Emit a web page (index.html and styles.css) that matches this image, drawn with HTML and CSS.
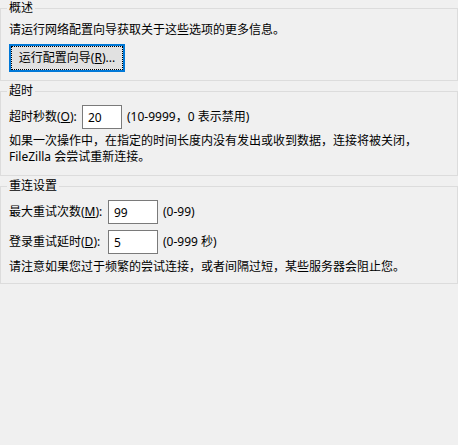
FILE: index.html
```html
<!DOCTYPE html>
<html lang="zh-CN">
<head>
<meta charset="utf-8">
<link rel="stylesheet" href="styles.css">
</head>
<body>
<fieldset class="group">
  <legend class="title">概述</legend>
  <p class="text">请运行网络配置向导获取关于这些选项的更多信息。</p>
  <button class="btn" type="button">运行配置向导(<u>R</u>)...</button>
</fieldset>
<fieldset class="group">
  <legend class="title">超时</legend>
  <div class="row">
    <span class="label label-timeout">超时秒数(<u>O</u>):</span>
    <input class="field field-short" type="text" value="20" readonly>
    <span class="hint">(10-9999，0 表示禁用)</span>
  </div>
  <p class="text text-after-row">如果一次操作中，在指定的时间长度内没有发出或收到数据，连接将被关闭，<br>FileZilla 会尝试重新连接。</p>
</fieldset>
<fieldset class="group">
  <legend class="title">重连设置</legend>
  <div class="row">
    <span class="label label-retry">最大重试次数(<u>M</u>):</span>
    <input class="field field-long" type="text" value="99" readonly>
    <span class="hint">(0-99)</span>
  </div>
  <div class="row row-next">
    <span class="label label-retry">登录重试延时(<u>D</u>):</span>
    <input class="field field-long" type="text" value="5" readonly>
    <span class="hint">(0-999 秒)</span>
  </div>
  <p class="text text-note">请注意如果您过于频繁的尝试连接，或者间隔过短，某些服务器会阻止您。</p>
</fieldset>
</body>
</html>
```

FILE: styles.css
```css
html, body {
  margin: 0;
  padding: 0;
  background: #f0f0f0;
}

body {
  font-family: "Noto Sans", "Noto Sans CJK SC", sans-serif;
  font-size: 12px;
  line-height: 16px;
  color: #000;
}

.group {
  margin: 0 0 2px 0;
  padding: 6px 8px 8px 8px;
  border: 1px solid #dcdcdc;
  min-width: 0;
}

.group:nth-of-type(2) {
  padding-bottom: 10px;
}

.title {
  padding: 0 2px;
  margin-left: -2px;
  line-height: 16px;
}

.text {
  margin: 0;
  line-height: 16px;
}

.text-after-row {
  margin-top: 4px;
}

.text-note {
  margin-top: 5px;
}

.btn {
  display: block;
  margin-top: 6px;
  width: 116px;
  height: 28px;
  padding: 0;
  background: #e1e1e1;
  border: 2px solid #0078d7;
  outline: 1px dotted #000;
  outline-offset: -3px;
  font: inherit;
  color: #000;
}

.row {
  display: flex;
  align-items: center;
}

.row-next {
  margin-top: 6px;
}

.label {
  flex: none;
}

.label-timeout {
  width: 73px;
}

.label-retry {
  width: 99px;
}

.field {
  box-sizing: border-box;
  height: 24px;
  margin: 0;
  padding: 0 5px;
  border: 1px solid #7a7a7a;
  background: #fff;
  font: inherit;
  color: #000;
  outline: none;
}

.field-short {
  width: 40px;
}

.field-long {
  width: 50px;
}

.hint {
  margin-left: 5px;
}
```
